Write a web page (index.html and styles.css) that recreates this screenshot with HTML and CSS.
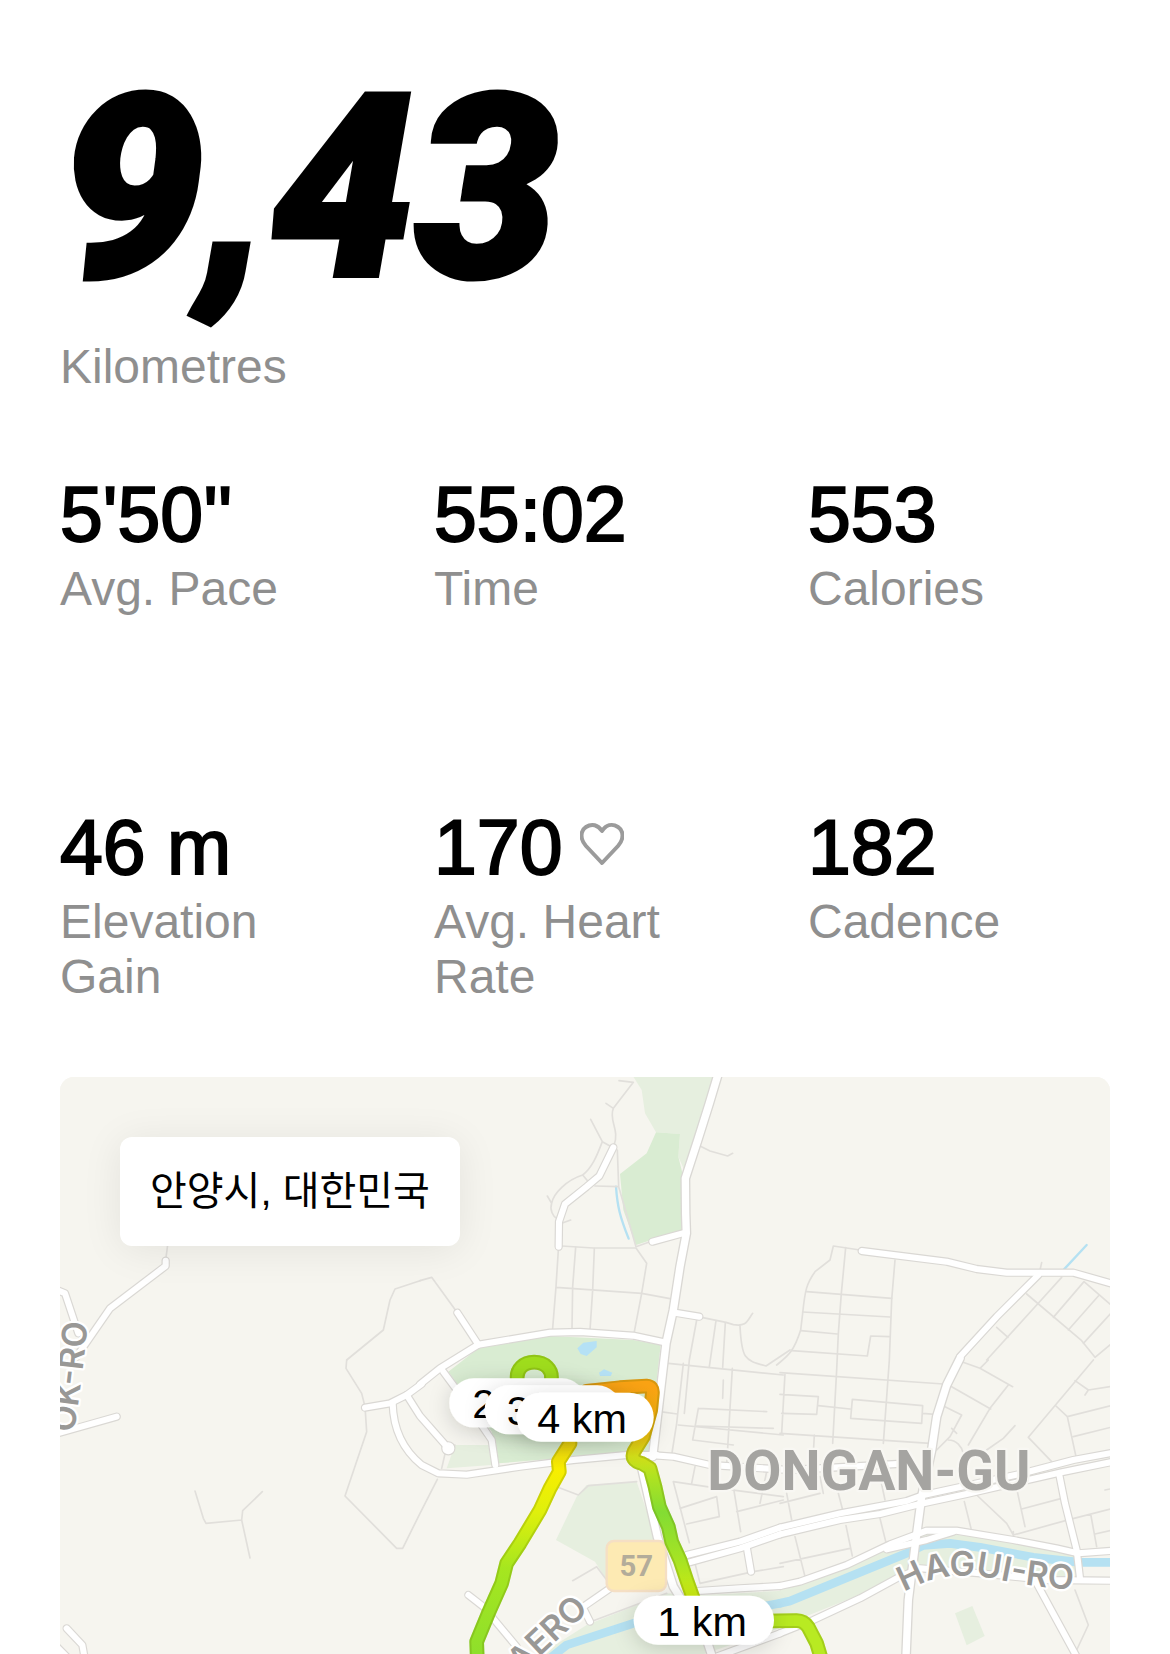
FILE: index.html
```html
<!DOCTYPE html>
<html lang="en">
<head>
    <meta charset="UTF-8">
    <meta name="viewport" content="width=device-width, initial-scale=1.0">
    <title>Run Summary</title>
    <link rel="stylesheet" href="styles.css">
</head>
<body>
    <main class="run">
        <header class="distance">
            <h1 class="distance-value">9,43</h1>
            <p class="label">Kilometres</p>
        </header>

        <section class="stats">
            <div class="stat">
                <p class="value">5'50''</p>
                <p class="label">Avg. Pace</p>
            </div>
            <div class="stat">
                <p class="value">55:02</p>
                <p class="label">Time</p>
            </div>
            <div class="stat">
                <p class="value">553</p>
                <p class="label">Calories</p>
            </div>
            <div class="stat">
                <p class="value">46 m</p>
                <p class="label">Elevation Gain</p>
            </div>
            <div class="stat">
                <p class="value">170
                    <svg class="heart" viewBox="0 0 44 44" aria-hidden="true">
                        <path d="M22 41 L6 24 C0 17 0 9 6 5 C12 1 18 3 22 9 C26 3 32 1 38 5 C44 9 44 17 38 24 Z"/>
                    </svg>
                </p>
                <p class="label">Avg. Heart Rate</p>
            </div>
            <div class="stat">
                <p class="value">182</p>
                <p class="label">Cadence</p>
            </div>
        </section>

        <section class="map">
            <svg class="map-canvas" viewBox="0 0 3150 1731" preserveAspectRatio="xMidYMin slice">
                <defs>
                    <linearGradient id="west" gradientUnits="userSpaceOnUse" x1="0" y1="300" x2="0" y2="940">
                        <stop offset="0" stop-color="#e9cf10"/>
                        <stop offset=".14" stop-color="#f8ee00"/>
                        <stop offset=".34" stop-color="#dff00c"/>
                        <stop offset=".6" stop-color="#a6e61f"/>
                        <stop offset="1" stop-color="#8fdf2b"/>
                    </linearGradient>
                    <linearGradient id="east" gradientUnits="userSpaceOnUse" x1="0" y1="140" x2="0" y2="770">
                        <stop offset="0" stop-color="#fba313"/>
                        <stop offset=".2" stop-color="#f3b60c"/>
                        <stop offset=".33" stop-color="#d3df18"/>
                        <stop offset=".42" stop-color="#b2e320"/>
                        <stop offset=".6" stop-color="#83dc33"/>
                        <stop offset=".82" stop-color="#a5e324"/>
                        <stop offset="1" stop-color="#cdeb10"/>
                    </linearGradient>
                    <filter id="shadow" x="-30%" y="-60%" width="160%" height="240%">
                        <feDropShadow dx="0" dy="12" stdDeviation="32" flood-color="#000" flood-opacity=".16"/>
                    </filter>

                    <g id="roads">
                        <g transform="translate(-30 -21)">
                            <path d="M10 655 L45 670 85 790"/>
                            <path d="M347 572 L347 588 180 715 80 860"/>
                        </g>
                        <g transform="translate(1080 -21)">
                            <path d="M697 515 L799 487"/>
                            <path d="M765 728 L838 740"/>
                            <path d="M580 232 L538 318 500 350 435 402 417 455 416 530"/>
                            <path d="M112 728 L175 824"/>
                            <path d="M0 943 L60 895 175 824 390 788 480 786 640 797 738 818"/>
                        </g>
                        <g transform="translate(2160 -21)">
                            <path d="M245 543 L500 575 590 597 680 608 880 608 1000 642"/>
                            <path d="M775 615 L650 740 540 860"/>
                        </g>
                        <g transform="translate(-30 849)">
                            <path d="M20 221 L200 170"/>
                            <path d="M50 805 L97 855 105 900"/>
                            <path d="M10 850 L50 890"/>
                            <path d="M945 143 L1020 130 1070 105 1115 72"/>
                            <path d="M1028 130 C1030 210 1060 270 1115 315 L1165 340 1250 344 1410 320 1570 300 1730 285 1820 285"/>
                        </g>
                        <g transform="translate(1080 789)">
                            <path d="M-40 165 L0 228 85 325"/>
                            <path d="M70 95 L140 190 215 300 226 375"/>
                            <circle cx="85" cy="325" r="9"/>
                            <path d="M690 345 L760 350 870 375 1110 390 1430 372"/>
                            <path d="M800 645 L960 605 1080 563"/>
                            <path d="M805 668 L960 625 1080 583"/>
                            <path d="M980 620 L993 695"/>
                            <path d="M820 754 L960 745 1080 738"/>
                            <path d="M145 765 L190 800 290 920"/>
                            <path d="M490 800 L580 738 M510 845 L490 805"/>
                            <path d="M890 950 L1080 880"/>
                        </g>
                        <g transform="translate(2160 849)">
                            <path d="M0 503 L180 460 380 423 430 405 720 342 880 300 1000 278"/>
                            <path d="M0 523 L180 480 300 462 420 432 560 402 840 338 1000 305"/>
                            <path d="M0 678 L60 665 200 615 330 553 440 512 530 512 700 540 830 565 895 580 1000 572"/>
                            <path d="M320 568 L440 540 520 515"/>
                            <path d="M0 820 L100 780 240 715 350 655 420 625 600 640 800 660 1000 662"/>
                            <path d="M900 655 L890 570 855 430 838 345"/>
                            <path d="M770 670 L830 780 890 890"/>
                        </g>
                    </g>

                    <g id="main-roads">
                        <g transform="translate(1080 -21)">
                            <path d="M895 10 L868 100 835 205 796 325 797 430 799 490 780 590 760 720 738 820 698 1160"/>
                            <path d="M663 1185 L712 1400 760 1550 860 1710 880 1770"/>
                        </g>
                        <g transform="translate(2160 849)">
                            <path d="M540 -5 L500 75 470 170 455 270 425 410 405 560 385 720 378 890"/>
                        </g>
                    </g>

                    <path id="route-loop" d="M293 125 C276 47 409 47 393 125"/>
                    <path id="route-west" d="M172 960 L170 905 205 820 245 730 260 670 300 610 360 510 390 445 418 395 415 365 450 310"/>
                    <path id="route-east" d="M500 154 L600 143 680 138 Q699 139 697 160 L692 210 670 290 642 335 Q630 362 665 370 L690 385 705 440 718 500 745 560 755 605 780 660 800 720 825 790"/>
                    <path id="route-south" d="M1040 843 L1130 842 Q1152 842 1165 862 L1190 910 1205 960"/>
                    <g id="route">
                        <use href="#route-loop" stroke="#9fdd1c"/>
                        <use href="#route-west" stroke="url(#west)"/>
                        <use href="#route-east" stroke="url(#east)"/>
                        <use href="#route-south" stroke="#b8ea22"/>
                    </g>
                    <g id="route-outline">
                        <use href="#route-loop"/>
                        <use href="#route-west"/>
                        <use href="#route-east"/>
                        <use href="#route-south"/>
                    </g>
                </defs>

                <rect class="land" width="3150" height="1731"/>

                <!-- parks -->
                <g transform="translate(1080 -21)">
                    <path class="green-light" d="M640 20 L880 20 835 180 795 305 775 260 780 192 708 187 675 130 665 60Z"/>
                    <path class="green" d="M708 187 L780 192 775 260 790 320 785 480 648 525 610 420 600 312 680 250Z"/>
                </g>
                <g transform="translate(1080 789)">
                    <path class="green" d="M85 95 L175 25 390 -12 640 0 722 15 685 345 455 352 235 370 215 275Z"/>
                    <path class="green-light" d="M105 315 L205 315 215 375 80 385Z"/>
                    <path class="green-light" d="M500 435 L650 425 710 600 660 720 560 720 525 665 408 600 470 470Z"/>
                    <path class="green-light" d="M1090 752 L860 765 740 760 500 855 350 950 830 950 1090 860Z"/>
                    <path class="water-area" d="M472 25 L490 8 530 3 530 22 500 48 482 42Z"/>
                    <path class="water-area" d="M537 98 L552 88 577 98 572 108 540 108Z"/>
                </g>
                <g transform="translate(2160 849)">
                    <path class="green-light" d="M0 690 L200 620 440 520 620 530 895 585 910 650 600 640 400 635 200 720 0 800Z"/>
                    <path class="green-light" d="M525 760 L577 738 614 828 560 856Z"/>
                </g>

                <!-- water -->
                <g class="river">
                    <path transform="translate(1080 789)" d="M390 955 L440 915 640 850 750 830 1000 805 1080 790"/>
                    <path transform="translate(2160 849)" d="M0 730 L30 723 380 580 430 556 510 550 600 562 760 592 900 607 1000 607"/>
                    <path class="stream" transform="translate(1080 -21)" d="M588 350 C592 410 600 440 626 506"/>
                    <path class="stream" transform="translate(2160 -21)" d="M852 598 L920 525"/>
                </g>

                <!-- small streets -->
                <g class="streets">
                    <g transform="translate(-30 -21)">
                        <path d="M353 525 L347 570"/>
                        <path d="M1110 632 L1035 657 1020 690 1000 780 890 870"/>
                        <path d="M1110 632 L1145 622 1220 725"/>
                    </g>
                    <g transform="translate(1080 -21)">
                        <path d="M597 32 L640 37 580 115 558 100 M580 115 C565 150 600 180 582 225"/>
                        <path d="M512 148 L547 215 570 228 M547 215 C530 260 515 295 488 315 L505 335 M488 315 C440 330 400 370 395 400 L382 378 M395 400 C388 420 400 440 410 445"/>
                        <path d="M592 240 L596 350 525 348 M596 350 L648 530 690 515 M425 460 L452 450"/>
                        <path d="M425 528 L520 534 648 534 680 580 665 670 642 790"/>
                        <path d="M415 540 L408 650 398 775 M467 532 L458 650 456 775 M523 536 L518 660 510 780 M408 652 L665 670 750 686"/>
                        <path d="M840 228 L870 243 923 258 938 250"/>
                        <path d="M845 742 L918 757 940 764 C980 770 980 755 998 730 M830 750 L808 870 793 1030 M888 752 L868 890 M916 758 L908 892 M960 768 C965 870 975 870 1038 888 L1110 840"/>
                    </g>
                    <g transform="translate(2160 -21)">
                        <path d="M240 540 L160 528 150 570 105 605 C80 640 75 660 68 730 L62 780 C40 850 20 860 -10 885"/>
                        <path d="M197 533 L184 670 175 790 170 900 158 1120 M345 570 L335 690 328 870 310 1120"/>
                        <path d="M80 665 L335 685 M68 726 L330 741 M62 782 L172 792 M35 842 L262 858 272 798 328 800"/>
                        <path d="M845 622 L770 705 620 870 M740 672 L905 812 945 862 990 825 M912 635 L820 742 M955 678 L865 780 M1000 722 L910 820 M912 635 L990 702 M650 772 L684 802"/>
                        <path d="M785 578 L780 600"/>
                    </g>
                    <g transform="translate(-30 849)">
                        <path d="M890 0 L888 25 935 100 945 140 950 215 885 408 1040 565 1058 565 1110 460 1162 358"/>
                        <path d="M435 393 L460 475 468 490 575 480 578 452 637 395 M575 480 L600 594"/>
                    </g>
                    <g transform="translate(1080 789)">
                        <path d="M745 70 L1090 105 M720 215 L772 222 M790 70 L770 250 755 345 M937 85 L930 205 920 375 M775 255 L1090 285 M835 205 L1040 215 M835 205 L818 300 940 315 M830 258 L1060 265 M910 120 L908 175"/>
                        <path d="M65 385 L80 320 105 315"/>
                        <path d="M410 440 L475 465 505 437 650 425"/>
                        <path d="M760 425 L808 608 M760 425 L860 440 1090 470 M825 380 L815 430 M780 505 L890 470 898 530 800 552 M940 440 L962 575 M950 515 L1090 480 M1040 395 L1020 490"/>
                        <path d="M825 670 L840 730 1000 695 1090 680 M458 722 L530 680 560 720 M500 850 L740 760"/>
                    </g>
                    <g transform="translate(2160 849)">
                        <path d="M0 38 L490 72 M15 40 L5 220 M0 103 L115 110 110 163 5 160 M115 137 L210 147 M217 118 L428 137 425 190 212 175Z M428 160 L465 163 M0 220 L450 250 M103 225 L100 280"/>
                        <path d="M0 430 L120 400 M20 400 L35 480 M120 350 L130 400 M175 400 L188 450 M300 350 L315 420 M45 530 L75 650 M0 610 L210 565 M198 497 L217 588 M300 475 L318 548 M553 425 L573 505"/>
                        <path d="M545 5 L600 25 698 80 M600 25 L625 0 M685 75 L630 145 565 255 M515 80 L632 147 M495 140 L545 165 510 230 470 270 M515 205 L530 220 M505 240 C530 240 545 260 550 280 M705 197 L670 235 620 270"/>
                        <path d="M940 0 L745 232 815 305 M885 62 L925 90 1000 78 M925 90 L915 105 M828 138 L862 170 1000 135 M862 170 L888 290 M880 230 L1000 200"/>
                        <path d="M590 405 L680 490 700 525 870 478 1000 445 M712 395 L735 500 M725 447 L845 415 M932 462 L950 560 M945 522 L1000 510 M975 390 L1000 385 M700 515 L700 530 M885 690 L925 795 890 870"/>
                    </g>
                </g>

                <use href="#roads" class="road-edge"/>
                <use href="#main-roads" class="main-edge"/>
                <use href="#roads" class="road-fill"/>
                <use href="#main-roads" class="main-fill"/>

                <!-- place names -->
                <g class="street-name">
                    <path id="hagui" class="guide" d="M2532 1546 C2616 1494 2716 1487 2806 1506 S2986 1539 3146 1544"/>
                    <text><textPath href="#hagui">HAGUI-RO</textPath></text>
                    <path id="okro" class="guide" d="M42 1068 Q64 930 90 680"/>
                    <text><textPath href="#okro">OK-RO</textPath></text>
                    <text text-anchor="end" transform="translate(1588 1600) rotate(-43)">AERO</text>
                </g>
                <text class="district" x="1942" y="1239">DONGAN-GU</text>

                <g class="shield">
                    <rect x="1640" y="1392" width="178" height="150" rx="22"/>
                    <text x="1729" y="1497">57</text>
                </g>

                <!-- route -->
                <g class="route" transform="translate(1080 789)">
                    <use href="#route" class="route-edge"/>
                    <use href="#route-outline" class="route-shade"/>
                    <use href="#route" class="route-fill"/>
                </g>

                <!-- kilometre markers -->
                <g class="markers" transform="translate(1080 789)">
                    <g>
                        <rect x="88" y="115" width="411" height="147" rx="73"/>
                        <text x="157" y="235">2 km</text>
                    </g>
                    <g>
                        <rect x="194" y="136" width="411" height="147" rx="73"/>
                        <text x="260" y="256">3 km</text>
                    </g>
                    <g>
                        <rect x="290" y="158" width="411" height="147" rx="73"/>
                        <text x="352" y="278">4 km</text>
                    </g>
                    <g>
                        <rect x="641" y="767" width="421" height="147" rx="73"/>
                        <text x="712" y="887">1 km</text>
                    </g>
                </g>
            </svg>

            <p class="place" lang="ko">안양시, 대한민국</p>
        </section>
    </main>
</body>
</html>
```

FILE: styles.css
```css
* {
    box-sizing: border-box;
}

body {
    margin: 0;
    background-color: #fff;
    color: #000;
    font-family: "Liberation Sans", Arial, sans-serif;
}

h1,
p {
    margin: 0;
}

.run {
    display: flex;
    flex-direction: column;
    min-height: 100vh;
    padding: 60px 60px 0;
}

.distance-value {
    margin-bottom: 22px;
    font-family: Roboto, sans-serif;
    font-size: 256px;
    font-weight: 900;
    font-style: italic;
    line-height: 257px;
    -webkit-text-stroke: 5px #000;
}

.label {
    color: #8f8f8f;
    font-size: 48px;
    line-height: 55px;
}

.stats {
    display: grid;
    grid-template-columns: repeat(3, 1fr);
    grid-auto-rows: minmax(200px, auto);
    gap: 133px 72px;
    margin-top: 77px;
}

.value {
    display: flex;
    align-items: center;
    gap: 18px;
    margin-bottom: 4px;
    font-size: 77px;
    line-height: 86px;
    white-space: nowrap;
    -webkit-text-stroke: 2px #000;
}

.heart {
    width: 44px;
    height: 44px;
    margin-bottom: 6px;
    fill: none;
    stroke: #9b9b9b;
    stroke-width: 4;
    stroke-linejoin: round;
}

.map {
    position: relative;
    flex: 1;
    min-height: 577px;
    margin-top: 73px;
    border-radius: 14px 14px 0 0;
    background-color: #f6f5ef;
    overflow: hidden;
}

.map-canvas {
    position: absolute;
    inset: 0;
    width: 100%;
    height: 100%;
}

.place {
    position: absolute;
    top: 60px;
    left: 60px;
    padding: 30px;
    border-radius: 12px;
    background-color: #fff;
    box-shadow: 0 4px 40px rgba(0, 0, 0, 0.08);
    font-family: "Liberation Sans", "Noto Sans CJK KR", sans-serif;
    font-size: 40px;
    line-height: 49px;
}

/* map layers */
.land {
    fill: #f6f5ef;
}

.green {
    fill: #d9ecd2;
}

.green-light {
    fill: #e6efdf;
}

.water-area {
    fill: #b5e1f5;
}

.river,
.streets,
.road-edge,
.road-fill,
.main-edge,
.main-fill,
.route {
    fill: none;
    stroke-linecap: round;
    stroke-linejoin: round;
}

.river {
    stroke: #b5e1f2;
    stroke-width: 26;
}

.stream {
    stroke-width: 7;
}

.streets {
    stroke: #e1dfdb;
    stroke-width: 5;
}

.road-edge {
    stroke: #dad8d4;
    stroke-width: 25;
}

.road-fill {
    stroke: #fff;
    stroke-width: 18;
}

.main-edge {
    stroke: #dad8d4;
    stroke-width: 30;
}

.main-fill {
    stroke: #fff;
    stroke-width: 22;
}

.guide {
    fill: none;
    stroke: none;
}

.street-name {
    font-family: Inter, sans-serif;
    font-size: 102px;
    font-weight: 600;
    fill: #999896;
    stroke: #fff;
    stroke-width: 14;
    stroke-linejoin: round;
    paint-order: stroke;
}

.district {
    font-family: Roboto, sans-serif;
    font-size: 166px;
    font-weight: 700;
    fill: #a5a4a1;
    stroke: #f8f7f3;
    stroke-width: 14;
    stroke-linejoin: round;
    paint-order: stroke;
}

.shield rect {
    fill: #fdeab3;
    stroke: #f5dfc4;
    stroke-width: 7;
}

.shield text {
    font-family: Roboto, sans-serif;
    font-size: 88px;
    font-weight: 700;
    text-anchor: middle;
    fill: #b3ac9a;
}

.route-edge {
    stroke-width: 44;
}

.route-shade {
    stroke: rgba(90, 110, 0, 0.22);
    stroke-width: 44;
}

.route-fill {
    stroke-width: 32;
}

.markers rect {
    fill: #fff;
    filter: url(#shadow);
}

.markers text {
    font-family: "Liberation Sans", Arial, sans-serif;
    font-size: 124px;
    fill: #000;
}
```
